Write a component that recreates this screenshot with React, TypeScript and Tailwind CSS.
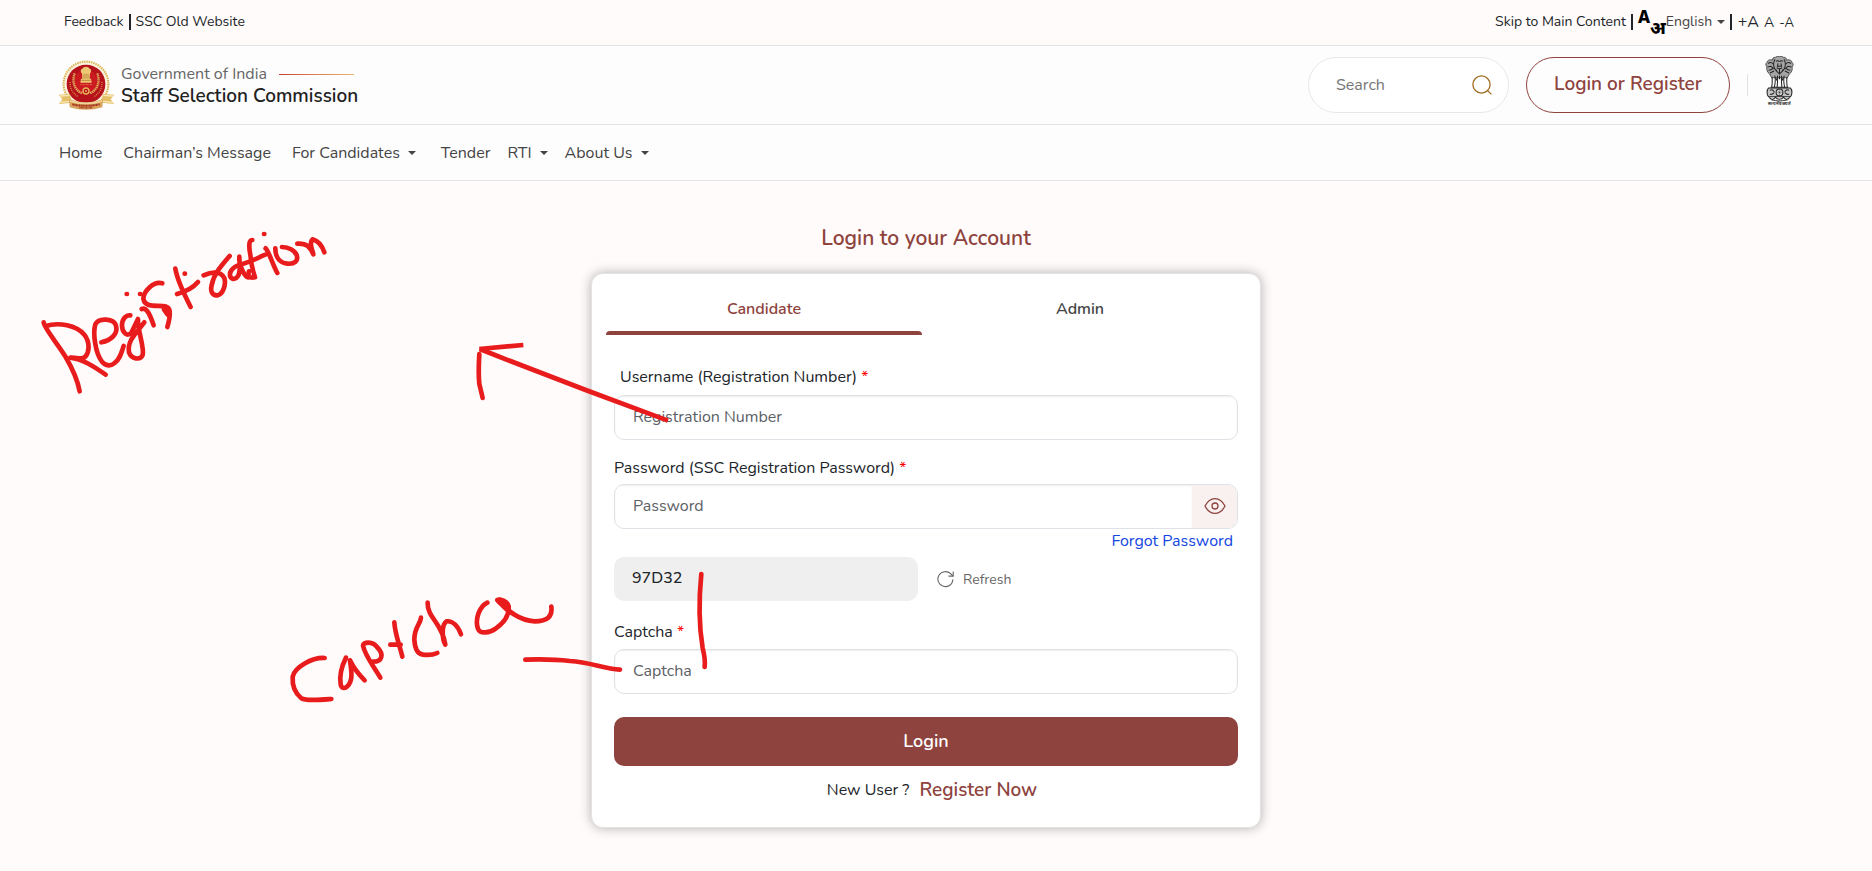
import React, { useState } from 'react';

const navItems = [
  { label: 'Home', menu: false, className: 'mr-1' },
  { label: 'Chairman’s Message', menu: false, className: 'mr-1' },
  { label: 'For Candidates', menu: true, className: 'mr-2' },
  { label: 'Tender', menu: false, className: '' },
  { label: 'RTI', menu: true, className: '' },
  { label: 'About Us', menu: true, className: '' },
];

function Caret({ className = '' }: { className?: string }) {
  return (
    <svg viewBox="0 0 8 4" className={`w-2 h-1 shrink-0 ${className}`} fill="currentColor" aria-hidden="true">
      <path d="M0 0h8L4 4z" />
    </svg>
  );
}

function SscLogo() {
  return (
    <svg viewBox="0 0 171 150" className="w-[57px] h-[50px] shrink-0" fill="none" role="img" aria-label="SSC logo">
      <circle cx="84" cy="72" r="71" fill="#f8f0da" />
      <circle cx="84" cy="72" r="67" stroke="#d6b04c" strokeWidth="6" strokeDasharray="4 3" />
      <circle cx="84" cy="72" r="62" stroke="#faf3df" strokeWidth="3" />
      <circle cx="84" cy="72" r="58" fill="#b5121b" />
      <circle cx="84" cy="66" r="36" fill="#cb1a20" />
      <path d="M50 40c-8 22-4 48 22 60M118 40c8 22 4 48-22 60" stroke="#e2b65e" strokeWidth="7" strokeDasharray="4 2" />
      <path d="M36 66c0 20 8 34 24 44M132 66c0 20-8 34-24 44" stroke="#dd8d48" strokeWidth="4" strokeDasharray="3 3" />
      <path d="M73 26c4-8 18-8 22 0 6 2 5 11 1 14l-1 16h4l2 12H67l2-12h4l-1-16c-5-3-5-12 1-14z" fill="#edc774" />
      <path d="M78 42v14M84 40v16M90 42v14M70 61h28" stroke="#a86a25" strokeWidth="2" />
      <path d="M67 74h35" stroke="#e5744b" strokeWidth="3" strokeDasharray="3 1" />
      <circle cx="84" cy="93" r="9" fill="#b5121b" stroke="#e7b45a" strokeWidth="4" />
      <circle cx="84" cy="93" r="3" fill="#e7b45a" />
      <path d="M2 104l34-2 5 26-38 4 10-14z" fill="#e4bf68" />
      <path d="M169 104l-34-2-5 26 38 4-10-14z" fill="#e4bf68" />
      <path d="M6 108l29-2M5 127l32-3M165 108l-29-2M166 127l-32-3" stroke="#f9e7b3" strokeWidth="4" />
      <path d="M33 118c34 12 68 12 102 0l-2 24c-32 10-66 10-98 0z" fill="#d9a35e" />
      <path d="M36 123c32 10 64 10 96 0" stroke="#f1d69a" strokeWidth="4" />
      <path d="M43 133c27 6 55 6 82 0" stroke="#a3331e" strokeWidth="6" strokeDasharray="5 1 3 1" />
      <path d="M64 143c14 1 26 1 40 0" stroke="#a3331e" strokeWidth="4" strokeDasharray="3 1" />
    </svg>
  );
}

function NationalEmblem() {
  return (
    <svg viewBox="0 0 84 147" className="mb-2 w-[29px] h-[50px] shrink-0" fill="none" stroke="#222" strokeWidth="3" role="img" aria-label="National emblem of India">
      <path d="M30 4c6-5 18-5 24 0 6-1 9 3 8 8 8-3 17 1 17 7 5 4 4 10 0 12 2 8-1 18-8 22l-6 11H19l-6-11C6 49 3 39 5 31c-4-2-5-8 0-12 0-6 9-10 17-7-1-5 2-9 8-8z" fill="#a5a5a5" strokeWidth="2" />
      <path d="M29 10c-6 8-6 22 1 31l12 12 12-12c7-9 7-23 1-31M32 16c4-3 7-2 9 1M43 17c2-3 5-4 9-1M38 22l-2 8h12l-2-8M34 34c5 4 11 4 16 0M32 40l4 8M52 40l-4 8M42 36v17" />
      <path d="M8 22c6-4 12-3 16 2M7 32l10-2 8 8M10 42c6 0 10-3 14-6M14 50l12-6M76 22c-6-4-12-3-16 2M77 32l-10-2-8 8M74 42c-6 0-10-3-14-6M70 50l-12-6" />
      <path d="M20 62c1 10 1 20-1 30M64 62c-1 10-1 20 1 30M28 58c3 10 1 24-1 34M56 58c-3 10-1 24 1 34M36 58c1 12 0 24-1 34M48 58c-1 12 0 24 1 34" />
      <path d="M31 64l3 8M53 64l-3 8M42 58v10M16 92h52" />
      <path d="M10 94h64c6 6 6 20 0 26H10c-6-6-6-20 0-26z" fill="#c4c4c4" />
      <circle cx="42" cy="107" r="10" fill="#ddd" />
      <path d="M42 98v18M33 107h18M36 101l12 12M48 101l-12 12" strokeWidth="1" />
      <path d="M14 101c5-4 10-1 13 6M14 112c5 3 8-2 12-3M70 101c-5-4-10-1-13 6M70 112c-5 3-8-2-12-3" />
      <path d="M12 121c4 8 14 8 18 0 5 8 18 8 24 0 4 8 14 8 18 0M18 129c16 4 32 4 48 0" />
      <text x="42" y="145" textAnchor="middle" fontSize="13" fontWeight="700" fill="#222" stroke="none" fontFamily="sans-serif">सत्यमेव जयते</text>
    </svg>
  );
}

// freehand red pen notes laid over the page
function PenNotes() {
  return (
    <svg
      viewBox="0 0 720 720"
      className="absolute left-0 top-0 w-[720px] h-[720px] pointer-events-none"
      fill="none"
      stroke="#e81c1c"
      strokeWidth="14"
      strokeLinecap="round"
      strokeLinejoin="round"
      aria-label="Handwritten notes: Registration, Captcha"
    >
      <g transform="translate(30 220) scale(.3333)">
        <path d="M41 307c2 18 40 62 66 104 20 34 36 70 42 103" />
        <path d="M47 318c40-12 92-2 116 26 18 24 15 52 3 66-10 11-28 1-45 3 36 4 70 26 106 51" />
        <path d="M214 367c28-6 51-24 44-50-6-22-52-25-62-4-8 26 0 88 20 112 12 14 26 14 38 4 16-12 20-30 27-51" />
        <path d="M301 286c-12-2-25 10-25 30 0 22 16 36 28 22l20-41c-2 34 20 84 14 108-6 16-34 14-41-8-6-34 20-56 46-90" />
        <path d="M290 222h1M330 222h1M464 161h1M702 42h1" />
        <path d="M335 267c16-6 26 20 36 49" />
        <path d="M397 190c-26-8-56 24-57 46 2 14 12 20 27 21 26 2 48-4 52 16 2 18-2 32-7 48M402 268l11 16" />
        <path d="M436 146c4 24 26 76 46 115M441 222c22-6 46-16 63-36" />
        <path d="M521 166c22-10 50-14 62 8 6 20-4 48-20 52-18 2-22-14-18-30 6-34 30-60 54-88" />
        <path d="M630 138c-4-6-26 6-30 22-2 18 14 22 24 8 10-16 4-34 4-58-2 22 14 60 27 62" />
        <path d="M667 60c-12 0-10 24-6 44 2 26 8 50 14 68-18 4-22-6-18-18" />
        <path d="M640 131c18-4 44-18 66-27M707 85c8 6 22 50 35 74" />
        <path d="M736 85c0 22 10 44 36 46 22 2 34-8 28-26-6-14-24-24-44-24" />
        <path d="M802 71c28-2 38 10 48 32-4-18-14-34-2-45 14 4 28 18 35 39" />
      </g>
      <g transform="translate(270 580) scale(.3333)">
        <path d="M164 234c-38-2-90 28-96 56-2 32 8 50 26 65 14 8 50 5 90 2" />
        <path d="M228 233c-12 24-20 56-16 80 2 12 12 14 20 6 16-16 14-38 8-78 10 22 24 40 44 60" />
        <path d="M331 293c-20-34-46-66-52-96 0-12 30-14 42 4 22 22 16 44-12 44" />
        <path d="M373 127c2 34 16 70 24 103M361 194h31" />
        <path d="M453 113c-2 20-20 28-20 66 2 30 10 44 26 45 16 2 28 2 43-5" />
        <path d="M473 68c-2 44 44 62 53 126-10-18-12-60 4-70 18-2 34 14 43 39" />
        <path d="M652 68c-24 12-38 50-28 78 6 16 34 14 54-1 26-18 40-42 38-66-4-16-22-22-34-19 20 18 56 62 112 64 38 0 54-14 50-44" />
        <path d="M688 62l24 24" strokeWidth="20" />
        <path d="M766 239c60-2 90-1 134 4 60 4 100 22 150 26" />
      </g>
      <g transform="translate(440 320) scale(.3333)">
        <path d="M684 302Q400 198 119 87" strokeLinecap="butt" />
        <path d="M250 75L118 87" strokeLinecap="butt" />
        <path d="M118 102c-2 34-3 64 0 90l10 42" />
      </g>
      <g transform="translate(570 440) scale(.3333)">
        <path d="M394 402c-8 80-8 150 4 222 6 24 8 40 6 57" />
      </g>
    </svg>
  );
}

function Field({ id, label, type = 'text', placeholder, labelClass = '', children }: { id: string; label: string; type?: string; placeholder: string; labelClass?: string; children?: React.ReactNode }) {
  return (
    <div>
      <label htmlFor={id} className={`block leading-6 text-[#212529] ${labelClass}`}>
        {label} <span className="text-[#ff0000]">*</span>
      </label>
      <div className="flex h-[45px] overflow-hidden rounded-[10px] border border-[#dee2e6] bg-white">
        <input
          id={id}
          type={type}
          placeholder={placeholder}
          className="flex-1 min-w-0 px-[18px] pb-[2px] outline-none bg-transparent shadow-[inset_0_1px_2px_rgba(0,0,0,0.07)] placeholder:text-[#5c6166]"
        />
        {children}
      </div>
    </div>
  );
}

export default function App() {
  const [tab, setTab] = useState('Candidate');
  const [showPassword, setShowPassword] = useState(false);

  return (
    <div className="relative min-h-screen overflow-x-hidden bg-[#fffbfa] font-['Nunito','Open_Sans',sans-serif] text-[16px] text-[#212529]">
      <div className="flex h-[46px] items-center justify-between border-b border-[#e2e3e5] pl-16 pr-[78px] pb-[2px] text-[14px]">
        <div className="flex items-center gap-[5px]">
          <a href="#">Feedback</a>
          <span className="w-[2px] h-4 bg-[#212529]" />
          <a href="#">SSC Old Website</a>
        </div>
        <div className="flex items-center">
          <a href="#main">Skip to Main Content</a>
          <span className="ml-[5px] w-[2px] h-4 bg-[#212529]" />
          <span className="ml-[5px] flex h-6 font-['Noto_Sans',sans-serif] font-extrabold leading-[14px] text-black" aria-hidden="true">
            <span className="text-[17px]">A</span>
            <span className="self-end text-[18px]">अ</span>
          </span>
          <label className="flex items-center text-[#444]">
            <select aria-label="Language" className="w-[49px] appearance-none bg-transparent p-0 outline-none">
              <option>English</option>
            </select>
            <Caret className="ml-[2px]" />
          </label>
          <span className="ml-[5px] w-[2px] h-4 bg-[#212529]" />
          <div className="ml-[6px] flex items-baseline gap-[5px]">
            <button type="button" className="text-[16px]">+A</button>
            <button type="button" className="text-[14px]">A</button>
            <button type="button" className="text-[13px]">-A</button>
          </div>
        </div>
      </div>

      <header className="flex h-[79px] items-center justify-between border-b border-[#e2e3e5] bg-[#fdfdfd] pl-[58px] pr-[78px]">
        <a href="#" className="flex items-center gap-[6px]">
          <SscLogo />
          <div>
            <div className="flex items-center gap-3 leading-[22px] text-[#666]">
              Government of India
              <span className="w-[75px] h-px bg-linear-to-r from-[#c8402f] to-[#eab676]" />
            </div>
            <div className="text-[19px] leading-[22px] font-semibold text-[#212121]">Staff Selection Commission</div>
          </div>
        </a>
        <div className="flex items-center">
          <div className="flex h-14 w-[201px] items-center rounded-full border border-[#e8e8ea] bg-white pl-[27px] pr-4">
            <input type="search" aria-label="Search" placeholder="Search" className="flex-1 min-w-0 outline-none bg-transparent placeholder:text-[#757575]" />
            <button type="button" aria-label="Search">
              <svg viewBox="0 0 20 20" className="w-5 h-5" fill="none" stroke="#a06a1c" strokeWidth="1.3">
                <circle cx="9.5" cy="9.5" r="8.6" />
                <path d="M15.6 15.6l3.8 3.8" />
              </svg>
            </button>
          </div>
          <button type="button" className="ml-[17px] h-14 w-[204px] rounded-full border border-[#8e433e] pb-[2px] text-[19px] font-semibold text-[#8e433e]">Login or Register</button>
          <span className="ml-[17px] mr-[17px] w-px h-[22px] bg-[#dee2e6]" />
          <NationalEmblem />
        </div>
      </header>

      <nav className="flex h-14 items-center gap-[17px] border-b border-[#e2e3e5] bg-[#fdfdfd] pl-[59px] text-[#444]">
        {navItems.map((item) =>
          item.menu ? (
            <button key={item.label} type="button" aria-haspopup="menu" className={`flex items-center gap-2 ${item.className}`}>
              {item.label}
              <Caret />
            </button>
          ) : (
            <a key={item.label} href="#" className={item.className}>{item.label}</a>
          )
        )}
      </nav>

      <main id="main" className="flex flex-col items-center pr-5 pt-[43px] pb-[43px]">
        <h1 className="text-[21px] leading-7 font-semibold text-[#8e433e]">Login to your Account</h1>

        <div className="mt-[21px] w-[670px] rounded-xl border border-[#e3e3e3] bg-white pt-[13px] pb-[25px] shadow-[0_0_12px_rgba(0,0,0,0.3)]">
          <div role="tablist" className="flex pl-[14px] pr-[22px]">
            {['Candidate', 'Admin'].map((t) => (
              <button key={t} type="button" role="tab" aria-selected={tab === t} onClick={() => setTab(t)} className="flex-1">
                <span className={`flex h-11 items-center justify-center font-semibold ${tab === t ? 'text-[#8e433e]' : 'text-[#444]'}`}>{t}</span>
                <span className={`block h-1 rounded-t-[4px] ${tab === t ? 'bg-[#8e433e]' : ''}`} />
              </button>
            ))}
          </div>

          <form className="px-[22px] pt-[30px]" onSubmit={(e) => e.preventDefault()}>
            <Field id="username" label="Username (Registration Number)" placeholder="Registration Number" labelClass="ml-[6px] mb-[6px]" />
            <Field id="password" label="Password (SSC Registration Password)" type={showPassword ? 'text' : 'password'} placeholder="Password" labelClass="mt-4 mb-1">
              <button type="button" aria-label="Show password" onClick={() => setShowPassword(!showPassword)} className="flex w-[45px] items-center justify-center bg-[#f9f0f0] pb-[2px]">
                <svg viewBox="0 0 22 18" className="w-[22px] h-[18px]" fill="none" stroke="#8e433e" strokeWidth="1.3">
                  <path d="M1 9C3.6 4 7 1.6 11 1.6S18.4 4 21 9c-2.6 5-6 7.4-10 7.4S3.6 14 1 9z" strokeLinejoin="round" />
                  <circle cx="11" cy="9" r="3" />
                </svg>
              </button>
            </Field>
            <div className="flex justify-end pr-[5px] leading-6">
              <a href="#" className="text-[#1446e0]">Forgot Password</a>
            </div>
            <div className="mt-1 flex items-center">
              <output className="flex h-11 w-[304px] items-center rounded-[10px] bg-[#efefef] pl-[18px] pb-[2px] font-medium">97D32</output>
              <button type="button" className="ml-[19px] flex items-center gap-[9px] text-[14px] text-[#666]">
                <svg viewBox="0 0 17 18" className="w-[17px] h-[18px]" fill="none" stroke="#666" strokeWidth="1.1">
                  <path d="M15.9 9.5a7.5 7.5 0 1 1-2.3-5.8l2.4 2.3" />
                  <path d="M16.2 1.4v4.7h-4.7" />
                </svg>
                Refresh
              </button>
            </div>
            <Field id="captcha" label="Captcha" placeholder="Captcha" labelClass="mt-[19px] mb-[5px]" />
            <button type="submit" className="mt-[23px] h-[49px] w-full rounded-[10px] bg-[#8e433e] pb-[1px] text-[18px] font-semibold text-white">Login</button>
            <p className="mt-3 flex items-center justify-center gap-[10px] pl-3 leading-6">
              New User ?
              <a href="#" className="text-[19px] font-semibold text-[#8e433e]">Register Now</a>
            </p>
          </form>
        </div>
      </main>

      <PenNotes />
    </div>
  );
}
